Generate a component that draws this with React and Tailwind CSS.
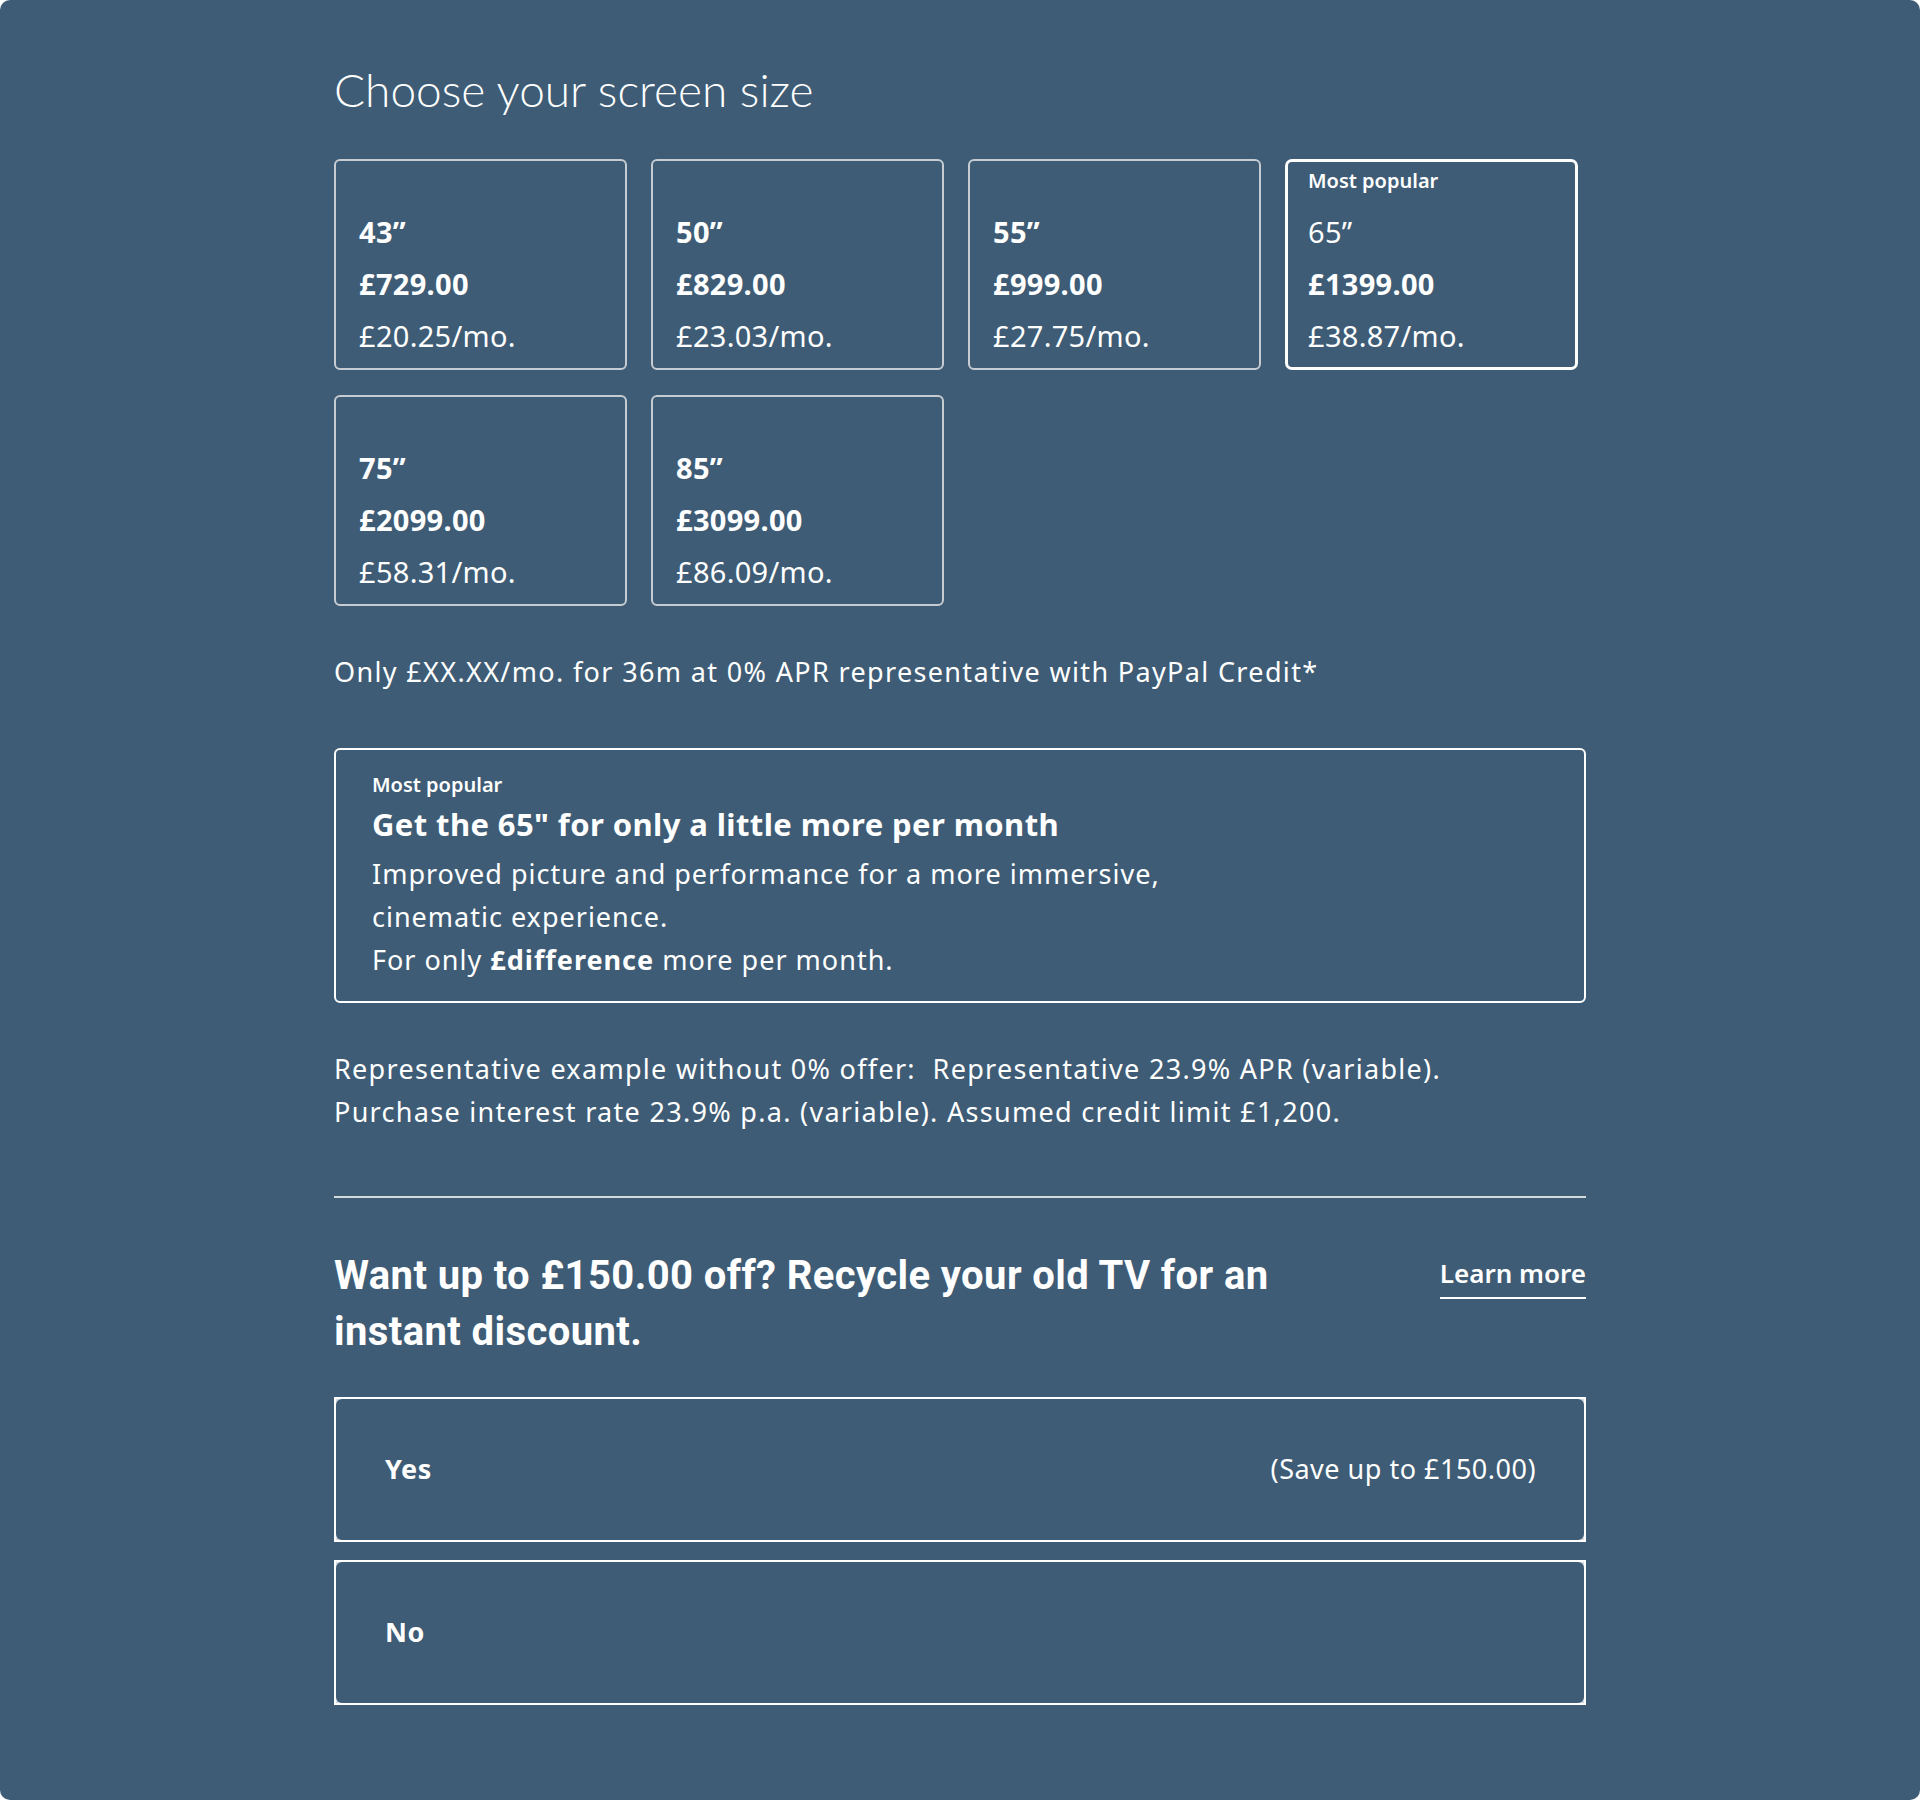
import { useState } from "react";

const sizes = [
  { inch: "43", price: "£729.00", monthly: "£20.25/mo." },
  { inch: "50", price: "£829.00", monthly: "£23.03/mo." },
  { inch: "55", price: "£999.00", monthly: "£27.75/mo." },
  { inch: "65", price: "£1399.00", monthly: "£38.87/mo.", popular: true },
  { inch: "75", price: "£2099.00", monthly: "£58.31/mo." },
  { inch: "85", price: "£3099.00", monthly: "£86.09/mo." },
];

const SizeCard = ({ size, selected, onSelect }) => (
  <button
    onClick={onSelect}
    className={
      selected
        ? "h-[211px] rounded-[7px] border-[3px] border-white px-[20px] pt-0 text-left"
        : "h-[211px] rounded-[6px] border-2 border-[#c6ccd1] px-[23px] pt-[1px] text-left"
    }
  >
    <div className="h-[26px] text-[20px] font-semibold leading-[26px]">
      {size.popular ? "Most popular" : ""}
    </div>
    <div className="mt-[12px] text-[29px] leading-[52px] tracking-[0.3px]">
      <div className={selected ? "font-normal" : "font-bold"}>{size.inch}”</div>
      <div className="font-bold">{size.price}</div>
      <div>{size.monthly}</div>
    </div>
  </button>
);

const Option = ({ label, note }) => (
  <div className="h-[145px] border-2 border-white bg-[#d3d9de]">
    <div className="flex h-full items-center justify-between rounded-[6px] bg-[#3e5c75] pl-[49px] pr-[48px] text-[27px] tracking-[0.5px]">
      <span className="font-bold">{label}</span>
      {note && <span>{note}</span>}
    </div>
  </div>
);

const App = () => {
  const [picked, setPicked] = useState("65");

  return (
    <div
      className="min-h-[1800px] w-full rounded-[10px] bg-[#3e5c75] text-white"
      style={{ fontFamily: '"Noto Sans", "Open Sans", sans-serif' }}
    >
      <div className="mx-auto w-[1252px] pt-[64px] pb-[90px]">
        <h1
          className="text-[46px] font-light leading-[52px]"
          style={{ fontFamily: 'Lato, "Noto Sans", sans-serif' }}
        >
          Choose your screen size
        </h1>

        <div className="mt-[43px] grid grid-cols-[repeat(4,293px)] gap-x-[24px] gap-y-[25px]">
          {sizes.map((s) => (
            <SizeCard
              key={s.inch}
              size={s}
              selected={picked === s.inch}
              onSelect={() => setPicked(s.inch)}
            />
          ))}
        </div>

        <p className="mt-[48px] text-[27px] leading-[36px] tracking-[1.35px]">
          Only £XX.XX/mo. for 36m at 0% APR representative with PayPal Credit*
        </p>

        <div className="mt-[58px] h-[255px] rounded-[6px] border-2 border-white pl-[36px] pt-[22px]">
          <div className="text-[20px] font-semibold leading-[26px]">Most popular</div>
          <div className="mt-[6px] text-[31px] font-bold leading-[40px] tracking-[0.4px]">
            Get the 65" for only a little more per month
          </div>
          <div className="mt-[8px] text-[27px] leading-[43px] tracking-[1px]">
            <p>Improved picture and performance for a more immersive,</p>
            <p>cinematic experience.</p>
            <p>
              For only <span className="font-bold">£difference</span> more per month.
            </p>
          </div>
        </div>

        <div className="mt-[44px] text-[27px] leading-[43px] tracking-[1.3px]">
          <p>Representative example without 0% offer:&nbsp; Representative 23.9% APR (variable).</p>
          <p>Purchase interest rate 23.9% p.a. (variable). Assumed credit limit £1,200.</p>
        </div>

        <div className="mt-[63px] h-[2px] bg-[#d5dadf]" />

        <div className="mt-[50px] flex items-start justify-between">
          <h2
            className="w-[980px] text-[40px] font-bold leading-[56px] tracking-[0.4px]"
            style={{ fontFamily: 'Roboto, "Noto Sans", sans-serif' }}
          >
            Want up to £150.00 off? Recycle your old TV for an instant discount.
          </h2>
          <a
            href="#"
            className="mt-[7px] border-b-2 border-white pb-[6px] text-[26px] font-semibold leading-[36px]"
          >
            Learn more
          </a>
        </div>

        <div className="mt-[37px] flex flex-col gap-[18px]">
          <Option label="Yes" note="(Save up to £150.00)" />
          <Option label="No" />
        </div>
      </div>
    </div>
  );
};

export default App;
